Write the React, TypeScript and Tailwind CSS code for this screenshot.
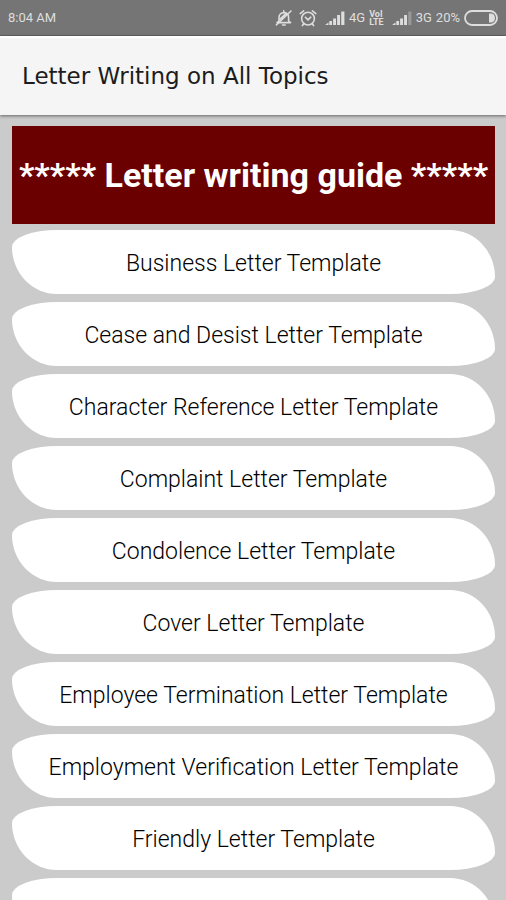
const templates = [
  'Business Letter Template',
  'Cease and Desist Letter Template',
  'Character Reference Letter Template',
  'Complaint Letter Template',
  'Condolence Letter Template',
  'Cover Letter Template',
  'Employee Termination Letter Template',
  'Employment Verification Letter Template',
  'Friendly Letter Template',
  'Introduction Letter Template',
]

const MutedBellIcon = () => (
  <svg width="18" height="18" viewBox="0 0 18 18" fill="none" stroke="currentColor" strokeWidth="1.6" strokeLinecap="round" strokeLinejoin="round">
    <path d="M4 12V8.5C4 5.5 6 3.8 8.8 3.8C11.6 3.8 13.6 5.5 13.6 8.5V12L15.6 13.6H2L4 12Z" />
    <path d="M7.5 16H10.2M8.8 1.8V3.6M1.4 15.8L16 2M5 10.2L11.4 4.2" />
  </svg>
)

const AlarmIcon = () => (
  <svg width="18" height="18" viewBox="0 0 18 18" fill="none" stroke="currentColor" strokeWidth="1.6" strokeLinecap="round">
    <circle cx="9" cy="9.6" r="6.4" />
    <path d="M1.2 4.6L4.6 1.8M16.8 4.6L13.4 1.8M6.4 8.2L9 10.8L11.8 8.2M4.6 15L3.4 16.6M13.4 15L14.6 16.6" />
  </svg>
)

const SignalIcon = ({ weak = false }) => (
  <svg width="20" height="16" viewBox="0 0 20 16" fill="currentColor">
    <path d="M0 15L3.5 12.5V15ZM4.3 11H7V15H4.3ZM8.1 8.5H11V15H8.1ZM12.1 5H15V15H12.1Z" />
    <path d="M16.2 1.5H19.4V15H16.2Z" opacity={weak ? 0.35 : 1} />
  </svg>
)

const BatteryIcon = () => (
  <svg width="34" height="16" viewBox="0 0 34 16" fill="none">
    <rect x="1" y="1" width="32" height="14" rx="7" stroke="currentColor" strokeWidth="1.8" />
    <path d="M25 3.5H27C29.4 3.5 31 5.5 31 8C31 10.5 29.4 12.5 27 12.5H25Z" fill="currentColor" />
  </svg>
)

const StatusBar = () => (
  <div className="flex h-9 shrink-0 items-center justify-between border-b border-[#646464] bg-[#757575] px-2 text-[13px] text-[#dedede]">
    <span>8:04 AM</span>
    <div className="flex items-center">
      <MutedBellIcon />
      <span className="ml-1.5">
        <AlarmIcon />
      </span>
      <span className="ml-2">
        <SignalIcon />
      </span>
      <span className="ml-1">4G</span>
      <span className="ml-1 flex flex-col text-[9px] leading-[8px] font-bold">
        <span>VoI</span>
        <span>LTE</span>
      </span>
      <span className="ml-2">
        <SignalIcon weak />
      </span>
      <span className="ml-1">3G</span>
      <span className="mx-1">20%</span>
      <BatteryIcon />
    </div>
  </div>
)

const App = () => {
  return (
    <div className="flex h-screen flex-col overflow-hidden bg-[#cbcbcb] font-['Roboto',sans-serif]">
      <StatusBar />
      <header className="z-10 flex h-[79px] shrink-0 items-center border-t-2 border-white bg-[#f5f5f5] px-[22px] shadow-[0_1px_3px_rgba(0,0,0,0.5)]">
        <h1 className="font-['DejaVu_Sans',sans-serif] text-[23px] text-[#1c1c1c]">
          Letter Writing on All Topics
        </h1>
      </header>

      <main className="flex-1 overflow-y-auto pt-[11px] pr-[11px] pl-3 [scrollbar-width:none]">
        <h2 className="flex h-[98px] items-center justify-center bg-[#6b0000] text-[34px] font-bold whitespace-nowrap text-white">
          ***** Letter writing guide *****
        </h2>
        <ul className="mt-[6px] flex flex-col gap-2">
          {templates.map((template) => (
            <li key={template}>
              <button
                type="button"
                className="h-16 w-full rounded-[45px_45px_45px_45px/17px_47px_17px_47px] bg-white pt-1 text-[23px] font-light text-black">
                {template}
              </button>
            </li>
          ))}
        </ul>
      </main>
    </div>
  )
}

export default App
